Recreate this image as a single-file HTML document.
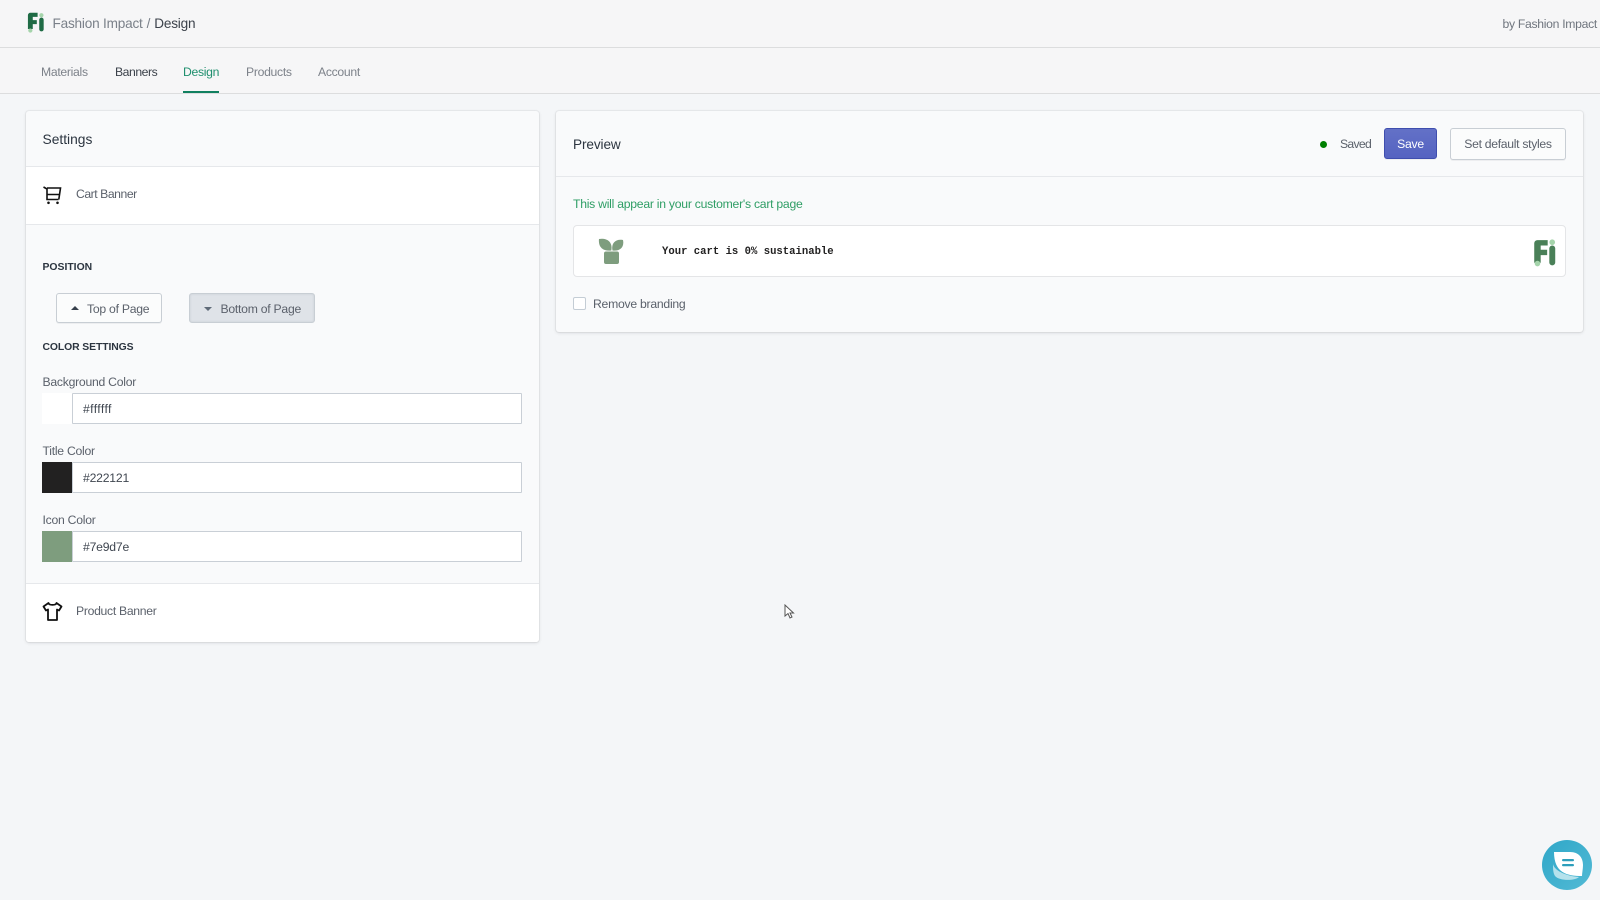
<!DOCTYPE html>
<html><head><meta charset="utf-8"><style>
html,body{margin:0;padding:0}
body{width:1600px;height:900px;background:#f4f6f8;position:relative;overflow:hidden;font-family:"Liberation Sans",sans-serif;font-size:12.2px;letter-spacing:-.25px;color:#5b616b}
.a,.t{position:absolute}
.t{white-space:nowrap;line-height:20px;height:20px}
.btn{position:absolute;box-sizing:border-box;border:1px solid #c8ced4;border-radius:3px;background:#fbfcfc;text-align:center;line-height:30px;white-space:nowrap;box-shadow:0 1px 0 rgba(22,29,37,.05)}
.inp{position:absolute;box-sizing:border-box;left:72px;width:450px;height:31px;background:#fff;border:1px solid #c9cfd6;border-radius:1px;padding-left:10px;line-height:31px;color:#3f4650;font-size:12.2px;letter-spacing:-.2px}
.sw{position:absolute;left:42px;width:30px;height:31px}
.cap{font-size:10.4px;font-weight:bold;letter-spacing:0;color:#2c3540}
.nav{font-size:12.2px;letter-spacing:-.3px}
</style></head><body>
<div class="a" style="left:0;top:0;width:1600px;height:47px;background:#f6f6f7;border-bottom:1px solid #dcddde"></div>
<div class="a" style="left:0;top:48px;width:1600px;height:45px;background:#f6f6f7;border-bottom:1px solid #dcddde"></div>
<svg class="a" style="left:27px;top:12px" width="18" height="21" viewBox="0 0 22 26"><path d="M1 4a3 3 0 0 1 3-3h9v5H7v4h5v5H7v6H1z" fill="#1f6b45"/><rect x="15" y="7" width="5.500" height="17" rx="2.700" fill="#1f6b45"/><circle cx="17.700" cy="4" r="2.600" fill="#a5d4ab"/><circle cx="4" cy="23" r="2.600" fill="#a5d4ab"/></svg>
<div class="t" style="left:52.500px;top:14px;font-size:13.600px;letter-spacing:-.2px;color:#7a8089">Fashion Impact<span style="margin:0 4px 0 4px">/</span><span style="color:#3c424b">Design</span></div>
<div class="t" style="right:3px;top:14px;font-size:12.200px;letter-spacing:-.3px;color:#6f757e">by Fashion Impact</div>
<div class="t nav" style="left:41px;top:62px;color:#7d828a">Materials</div>
<div class="t nav" style="left:115px;top:62px;color:#3c424b;letter-spacing:-.45px">Banners</div>
<div class="t nav" style="left:183px;top:62px;color:#1f8f6e">Design</div>
<div class="a" style="left:183px;top:91px;width:36px;height:2px;background:#108060"></div>
<div class="t nav" style="left:246px;top:62px;color:#7d828a">Products</div>
<div class="t nav" style="left:318px;top:62px;color:#7d828a">Account</div>

<div class="a" style="left:26px;top:111px;width:513px;height:531px;background:#f9fafb;border-radius:3px;box-shadow:0 0 0 1px rgba(63,63,68,.05),0 1px 3px rgba(63,63,68,.15)"></div>
<div class="a" style="left:26px;top:166px;width:513px;height:59px;background:#fff;border-top:1px solid #e6e8eb;border-bottom:1px solid #e6e8eb;box-sizing:border-box"></div>
<div class="a" style="left:26px;top:583px;width:513px;height:59px;background:#fff;border-top:1px solid #e6e8eb;box-sizing:border-box;border-radius:0 0 3px 3px"></div>
<div class="t" style="left:42.500px;top:130px;font-size:13.800px;letter-spacing:0;color:#2c3540">Settings</div>
<svg class="a" style="left:42px;top:184px" width="20" height="21" viewBox="0 0 20 21" fill="none" stroke="#111" stroke-width="1.600"><path d="M1.500 3L5 5V15.500H16.500M5 4H18.500L16.800 15.500M5 10.500H17.500"/><circle cx="6.500" cy="18.800" r="1.300" fill="#111" stroke="none"/><circle cx="15.500" cy="18.800" r="1.300" fill="#111" stroke="none"/></svg>
<div class="t" style="left:76px;top:183.500px;letter-spacing:-.45px">Cart Banner</div>
<div class="t cap" style="left:42.500px;top:258px">POSITION</div>
<div class="btn" style="left:56px;top:293px;width:106px;height:30px;text-align:left;padding-left:30px">Top of Page</div>
<div class="a" style="left:71px;top:306px;width:0;height:0;border:4.500px solid transparent;border-top:0;border-bottom:4.500px solid #36404c"></div>
<div class="btn" style="left:189px;top:293px;width:126px;height:30px;text-align:left;padding-left:30.500px;background:#dfe3e8;box-shadow:inset 0 0 2px rgba(99,115,129,.2)">Bottom of Page</div>
<div class="a" style="left:204px;top:307px;width:0;height:0;border:4.500px solid transparent;border-bottom:0;border-top:4.500px solid #5f6b78"></div>
<div class="t cap" style="left:42.500px;top:338px;letter-spacing:-.1px">COLOR SETTINGS</div>
<div class="t" style="left:42.500px;top:372px">Background Color</div>
<div class="sw" style="top:393px;background:#fff"></div><div class="inp" style="top:393px;letter-spacing:.4px">#ffffff</div>
<div class="t" style="left:42.500px;top:441px">Title Color</div>
<div class="sw" style="top:462px;background:#222121"></div><div class="inp" style="top:462px">#222121</div>
<div class="t" style="left:42.500px;top:510px">Icon Color</div>
<div class="sw" style="top:531px;background:#7e9d7e"></div><div class="inp" style="top:531px">#7e9d7e</div>
<svg class="a" style="left:42px;top:601px" width="21" height="21" viewBox="0 0 21 21" fill="none" stroke="#111" stroke-width="1.800" stroke-linejoin="round"><path d="M6.500 2L1.500 5.500l2.500 4 2-1V19h9V8.500l2 1 2.500-4L14.500 2c-.5 2.500-7.500 2.500-8 0z"/></svg>
<div class="t" style="left:76px;top:600.500px;letter-spacing:-.3px">Product Banner</div>

<div class="a" style="left:556px;top:111px;width:1027px;height:221px;background:#f9fafb;border-radius:3px;box-shadow:0 0 0 1px rgba(63,63,68,.05),0 1px 3px rgba(63,63,68,.15)"></div>
<div class="a" style="left:556px;top:176px;width:1027px;height:1px;background:#e6e8eb"></div>
<div class="t" style="left:573px;top:135px;font-size:13.600px;letter-spacing:-.1px;color:#2c3540">Preview</div>
<div class="a" style="left:1319.500px;top:140.500px;width:7.500px;height:7.500px;border-radius:50%;background:#008000"></div>
<div class="t" style="left:1340px;top:134px;letter-spacing:-.7px">Saved</div>
<div class="btn" style="left:1384px;top:128px;width:53px;height:31px;background:linear-gradient(#6371c7,#5563c1);border-color:#3f4eae;color:#fff">Save</div>
<div class="btn" style="left:1450px;top:128px;width:116px;height:32px;letter-spacing:-.3px">Set default styles</div>
<div class="t" style="left:573px;top:194px;color:#2f9e65">This will appear in your customer's cart page</div>
<div class="a" style="left:573px;top:225px;width:993px;height:52px;box-sizing:border-box;background:#fff;border:1px solid #e4e5e7;border-radius:4px"></div>
<svg class="a" style="left:598px;top:238px" width="26" height="27" viewBox="0 0 26 27" fill="#7e9d7e"><path d="M1 1C9-.5 15 4 13.300 12.500 5 13.500 0 9 1 1z"/><path d="M25 2C17 .5 13 6 14.500 12.500 22 13.500 26.500 9 25 2z"/><rect x="6" y="13.500" width="15" height="12.500" rx="2"/></svg>
<div class="t" style="left:662px;top:242px;font-family:'Liberation Mono',monospace;font-weight:bold;font-size:10.600px;letter-spacing:0;color:#222121">Your cart is 0% sustainable</div>
<svg class="a" style="left:1533px;top:239px" width="24" height="28" viewBox="0 0 22 26"><path d="M1 4a3 3 0 0 1 3-3h9.500v5H7v4h6v5H7v7H1z" fill="#4a8058"/><rect x="15" y="6" width="5.500" height="18.500" rx="2.700" fill="#4a8058"/><circle cx="17.700" cy="3" r="2.600" fill="#a5d4ab"/><circle cx="4" cy="22.800" r="2.600" fill="#a5d4ab"/></svg>
<div class="a" style="left:573px;top:297px;width:13px;height:13px;box-sizing:border-box;background:#fff;border:1px solid #c4cdd5;border-radius:2px"></div>
<div class="t" style="left:593px;top:294px">Remove branding</div>

<svg class="a" style="left:784px;top:604px" width="11" height="16" viewBox="0 0 11 16" fill="#fff" stroke="#555" stroke-width="1"><path d="M1 1v11l3-2.500 2 4.500 2-1-2-4h3.500z"/></svg>
<svg class="a" style="left:1540px;top:838px" width="54" height="54" viewBox="0 0 54 54"><defs><linearGradient id="g" x1="0" y1="0" x2="1" y2="1"><stop offset="0" stop-color="#2fa7c8"/><stop offset="1" stop-color="#52bad5"/></linearGradient></defs><circle cx="27" cy="27" r="25" fill="url(#g)"/><path d="M13 26c1 6 12 12 26 13-4 4-20 4-24-1-2-3-2-8-2-12z" fill="#b5e2ec"/><path d="M14 14h16c9 0 13 6 13 13 0 4-1 8-1 11-15 0-28-3-28-24z" fill="#fff"/><rect x="22" y="21" width="12" height="2.200" rx="1.100" fill="#2e9fbc"/><rect x="22" y="26" width="12" height="2.200" rx="1.100" fill="#2e9fbc"/></svg>
</body></html>
